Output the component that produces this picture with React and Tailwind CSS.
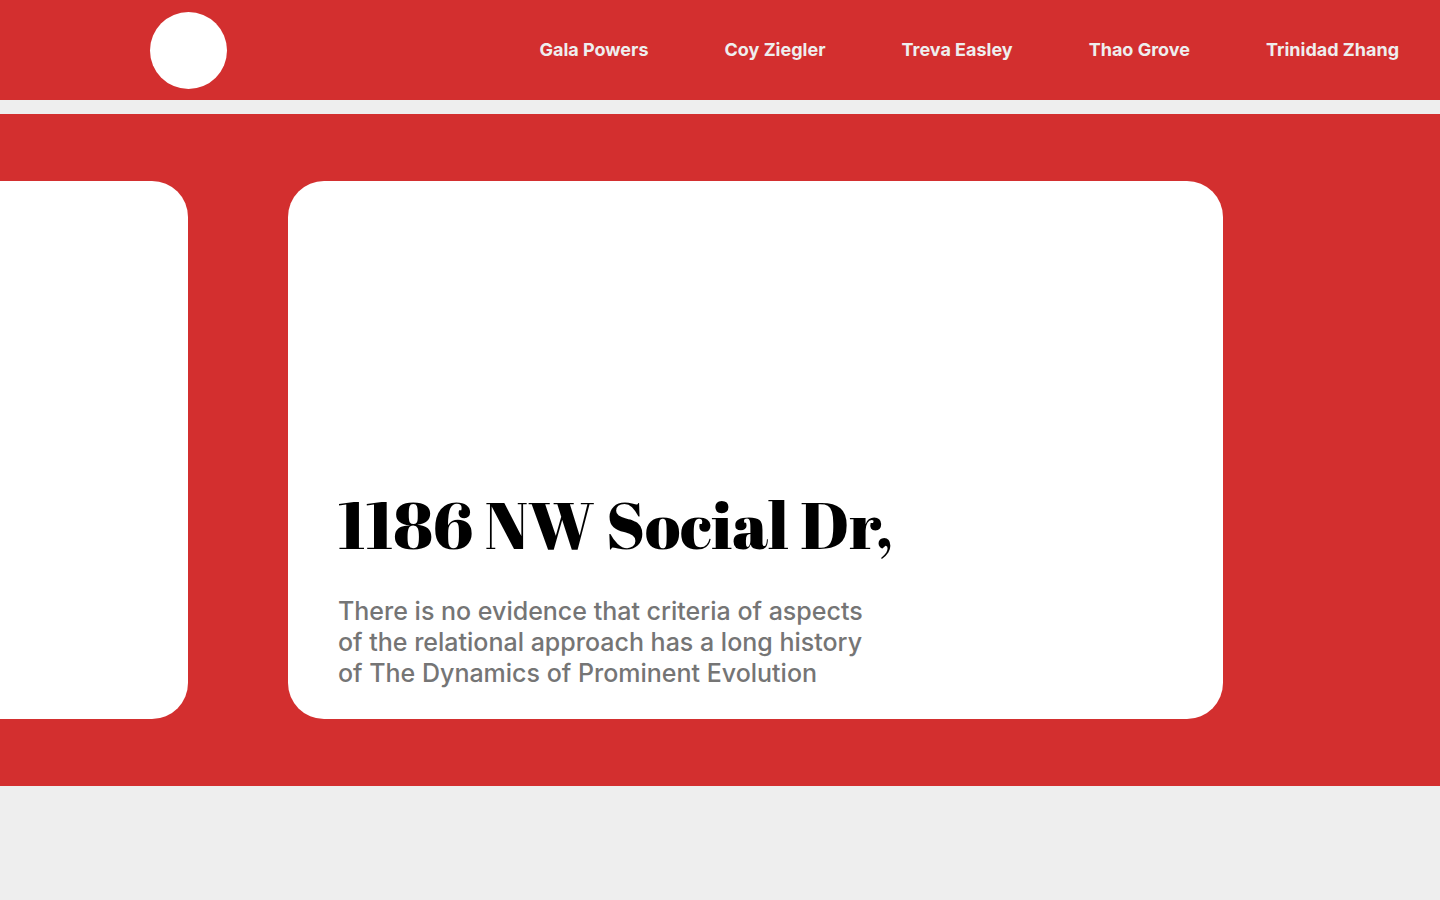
const links = ["Gala Powers", "Coy Ziegler", "Treva Easley", "Thao Grove", "Trinidad Zhang"];

export default function App() {
  return (
    <div className="min-h-screen overflow-x-hidden bg-[#eeeeee] font-['Inter',sans-serif]">
      <header className="flex h-[100px] items-center justify-between bg-[#d32f2f] pr-[41px] pl-[150px]">
        <a href="#" aria-label="Home" className="size-[77px] rounded-full bg-white" />
        <nav className="flex gap-[76px]">
          {links.map((name) => (
            <a key={name} href="#" className="whitespace-nowrap text-[18px] leading-6 font-bold text-[#eeeeee]">
              {name}
            </a>
          ))}
        </nav>
      </header>
      <main className="mt-3.5 flex bg-[#d32f2f] py-[67px]">
        <article className="w-[188px] shrink-0 rounded-r-[36px] bg-white" />
        <article className="mr-[217px] ml-[100px] flex min-h-[538px] flex-1 flex-col justify-end rounded-[36px] bg-white px-[50px] pb-[30px]">
          <h1 className="font-['Abril_Fatface','Liberation_Serif',serif] text-[65px] leading-[80px] font-normal text-black">
            1186 NW Social Dr,
          </h1>
          <p className="mt-8 max-w-[540px] text-[25px] leading-[31px] font-medium text-[#757575]">
            There is no evidence that criteria of aspects of the relational approach has a long history of The
            Dynamics of Prominent Evolution
          </p>
        </article>
      </main>
    </div>
  );
}
